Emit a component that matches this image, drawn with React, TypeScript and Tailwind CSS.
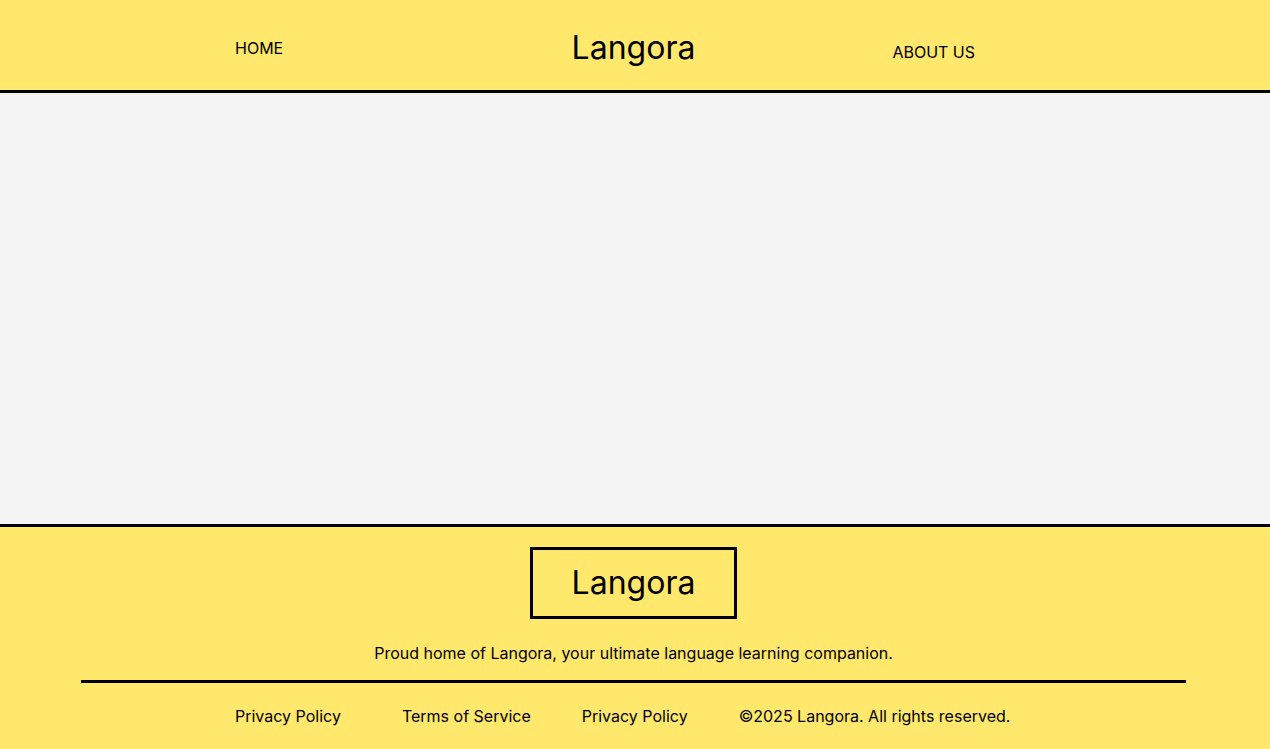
export default function App() {
  const links = [
    { label: "Privacy Policy", cls: "" },
    { label: "Terms of Service", cls: "ml-[61px]" },
    { label: "Privacy Policy", cls: "ml-[51px]" },
    { label: "©2025 Langora. All rights reserved.", cls: "ml-[51px]" },
  ];

  return (
    <div className="min-h-screen flex flex-col bg-[#f4f4f4] text-black font-['Inter',sans-serif]">
      <header className="h-[93px] bg-[#ffe86b] border-b-[3px] border-black grid grid-cols-[1fr_auto_1fr] items-center pr-[3px]">
        <div className="pl-[235px] pt-[6px] text-base">HOME</div>
        <div className="text-[32px] leading-none pt-[6px]">Langora</div>
        <div className="pl-[197px] pt-[13px] text-base">ABOUT US</div>
      </header>

      <main className="h-[431px]" />

      <footer className="flex-1 bg-[#ffe86b] border-t-[3px] border-black flex flex-col items-center pt-[20px] pr-[3px]">
        <div className="w-[207px] h-[72px] border-[3px] border-black flex items-center justify-center text-[32px] leading-none">
          Langora
        </div>
        <p className="mt-[22px] text-base leading-6">
          Proud home of Langora, your ultimate language learning companion.
        </p>
        <div className="mt-[15px] w-[1105px] h-[3px] bg-black" />
        <div className="mt-[21px] self-start pl-[235px] flex text-base leading-6">
          {links.map((l, i) => (
            <a key={i} href="#" className={l.cls}>
              {l.label}
            </a>
          ))}
        </div>
      </footer>
    </div>
  );
}
